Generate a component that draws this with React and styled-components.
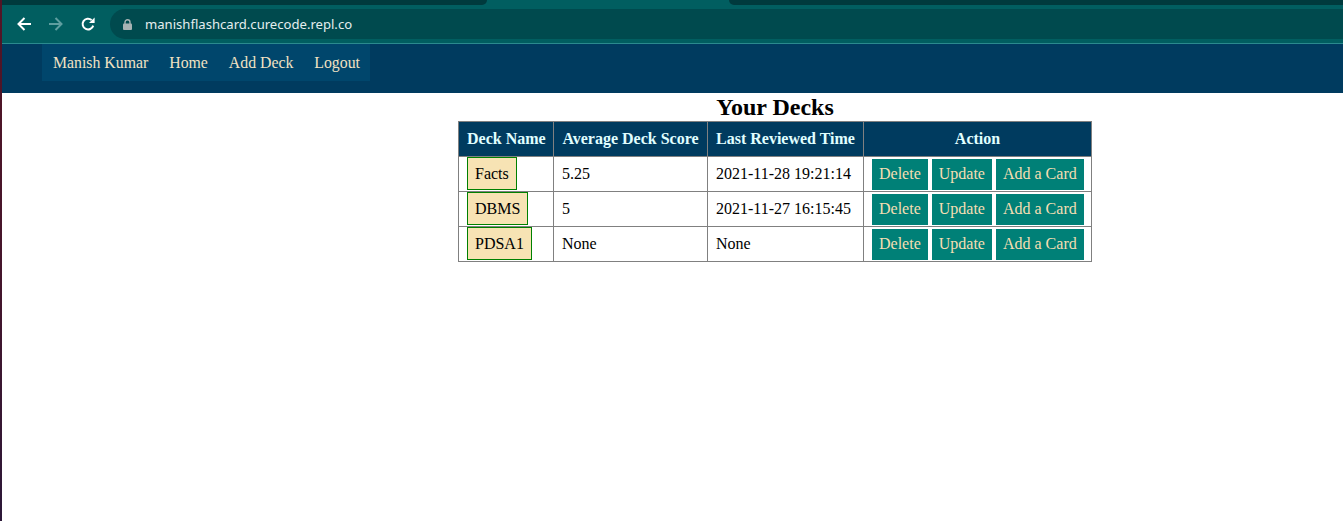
import styled, { createGlobalStyle } from 'styled-components';

const GlobalStyle = createGlobalStyle`
  html, body {
    margin: 0;
    padding: 0;
    background: #fff;
    overflow: hidden;
  }
  body {
    font-family: "Liberation Serif", "Times New Roman", serif;
    font-size: 16px;
    color: #000;
  }
`;

const Screen = styled.div`
  display: flex;
  min-height: 100vh;
`;

const DesktopEdge = styled.div`
  flex: none;
  width: 2px;
  background: linear-gradient(180deg, #531526 0%, #44152c 55%, #2c1838 100%);
`;

const Window = styled.div`
  flex: 1;
  min-width: 0;
  display: flex;
  flex-direction: column;
`;

/* browser chrome */
const TabStrip = styled.div`
  display: flex;
  height: 5px;
  background: #015e60;
`;

const TabShade = styled.div`
  background: #003a3d;
  width: ${({ $width }) => ($width ? `${$width}px` : 'auto')};
  flex: ${({ $width }) => ($width ? 'none' : '1')};
  border-radius: ${({ $side }) => ($side === 'left' ? '0 0 6px 0' : '0 0 0 6px')};
`;

const ActiveTab = styled.div`
  flex: none;
  width: 242px;
`;

const Toolbar = styled.div`
  display: flex;
  align-items: center;
  height: 38px;
  padding-left: 6px;
  background: #015e60;
  border-bottom: 1px solid #2b8a8e;
`;

const ToolButton = styled.div`
  flex: none;
  width: 32px;
  height: 32px;
  display: flex;
  align-items: center;
  justify-content: center;
  color: ${({ $dim }) => ($dim ? '#5f9ea0' : '#ffffff')};
`;

const Omnibox = styled.div`
  flex: 1;
  display: flex;
  align-items: center;
  gap: 13px;
  height: 30px;
  margin-left: 6px;
  padding-left: 13px;
  background: #004a4e;
  border-radius: 15px 0 0 15px;
`;

const Url = styled.span`
  font-family: "Noto Sans", "Open Sans", sans-serif;
  font-size: 13.1px;
  color: #e4eeee;
`;

/* site */
const NavBar = styled.nav`
  background: #003b5f;
  padding: 0 0 12px 40px;
`;

const NavList = styled.div`
  display: inline-flex;
  align-items: center;
  gap: 1px;
  height: 37px;
  padding-left: 1px;
  background: #00466c;
`;

const NavLink = styled.a`
  padding: 0 10px;
  color: #f1e2c3;
  font-size: 15.8px;
  text-decoration: none;
  cursor: pointer;
`;

const Main = styled.main`
  display: flex;
  flex-direction: column;
  align-items: center;
  padding-left: 205px;
`;

const Title = styled.h2`
  margin: 0;
  font-size: 24px;
  line-height: 28px;
  font-weight: bold;
`;

const Table = styled.table`
  border-collapse: separate;
  border-spacing: 0;
  table-layout: fixed;
  width: 634px;
  border-top: 1px solid #808080;
  border-left: 1px solid #808080;
`;

const Th = styled.th`
  padding: 8px;
  line-height: 18px;
  background: #003b5f;
  color: #e0ffff;
  font-size: 16px;
  font-weight: bold;
  text-align: center;
  white-space: nowrap;
  border-right: 1px solid #808080;
  border-bottom: 1px solid #808080;
`;

const Td = styled.td`
  padding: 0 8px 1px;
  font-size: 16px;
  line-height: 18px;
  white-space: nowrap;
  vertical-align: middle;
  border-right: 1px solid #808080;
  border-bottom: 1px solid #808080;
`;

const DeckTag = styled.span`
  display: flex;
  align-items: center;
  width: fit-content;
  height: 33px;
  box-sizing: border-box;
  padding: 0 7px;
  background: #f7e3b4;
  border: 1px solid #008000;
`;

const Actions = styled.div`
  display: flex;
  align-items: flex-end;
  gap: 4px;
  height: 32px;
`;

const ActionButton = styled.button`
  height: 31px;
  padding: 0 7px;
  border: none;
  background: #008077;
  color: #f5deb3;
  font-family: "Liberation Serif", "Times New Roman", serif;
  font-size: 16px;
  cursor: pointer;
`;

const ArrowIcon = ({ flip }) => (
  <svg width="16" height="16" viewBox="0 0 16 16" style={flip ? { transform: 'scaleX(-1)' } : undefined}>
    <path d="M15 8H2.5M8.5 2L2.5 8l6 6" fill="none" stroke="currentColor" strokeWidth="2" />
  </svg>
);

const ReloadIcon = () => (
  <svg width="16" height="16" viewBox="0 0 16 16">
    <path d="M13.2 9.6A5.4 5.4 0 1 1 11.6 4" fill="none" stroke="currentColor" strokeWidth="2" />
    <path d="M14.6 1.4v5.6H9z" fill="currentColor" />
  </svg>
);

const LockIcon = () => (
  <svg width="9" height="11" viewBox="0 0 9 11">
    <path d="M2 5V3.3a2.5 2.5 0 0 1 5 0V5" fill="none" stroke="#a7b3b4" strokeWidth="1.4" />
    <rect x="0" y="4.6" width="9" height="6.4" rx="1" fill="#a7b3b4" />
  </svg>
);

const decks = [
  { name: 'Facts', score: '5.25', reviewed: '2021-11-28 19:21:14' },
  { name: 'DBMS', score: '5', reviewed: '2021-11-27 16:15:45' },
  { name: 'PDSA1', score: 'None', reviewed: 'None' },
];

export default function App() {
  return (
    <>
      <GlobalStyle />
      <Screen>
        <DesktopEdge />
        <Window>
          <TabStrip>
            <TabShade $width={485} $side="left" />
            <ActiveTab />
            <TabShade $side="right" />
          </TabStrip>
          <Toolbar>
            <ToolButton><ArrowIcon /></ToolButton>
            <ToolButton $dim><ArrowIcon flip /></ToolButton>
            <ToolButton><ReloadIcon /></ToolButton>
            <Omnibox>
              <LockIcon />
              <Url>manishflashcard.curecode.repl.co</Url>
            </Omnibox>
          </Toolbar>

          <NavBar>
            <NavList>
              <NavLink>Manish Kumar</NavLink>
              <NavLink>Home</NavLink>
              <NavLink>Add Deck</NavLink>
              <NavLink>Logout</NavLink>
            </NavList>
          </NavBar>

          <Main>
            <Title>Your Decks</Title>
            <Table>
              <colgroup>
                <col style={{ width: 95 }} />
                <col style={{ width: 154 }} />
                <col style={{ width: 156 }} />
                <col style={{ width: 228 }} />
              </colgroup>
              <thead>
                <tr>
                  <Th>Deck Name</Th>
                  <Th>Average Deck Score</Th>
                  <Th>Last Reviewed Time</Th>
                  <Th>Action</Th>
                </tr>
              </thead>
              <tbody>
                {decks.map((deck) => (
                  <tr key={deck.name}>
                    <Td><DeckTag>{deck.name}</DeckTag></Td>
                    <Td>{deck.score}</Td>
                    <Td>{deck.reviewed}</Td>
                    <Td>
                      <Actions>
                        <ActionButton>Delete</ActionButton>
                        <ActionButton>Update</ActionButton>
                        <ActionButton>Add a Card</ActionButton>
                      </Actions>
                    </Td>
                  </tr>
                ))}
              </tbody>
            </Table>
          </Main>
        </Window>
      </Screen>
    </>
  );
}
